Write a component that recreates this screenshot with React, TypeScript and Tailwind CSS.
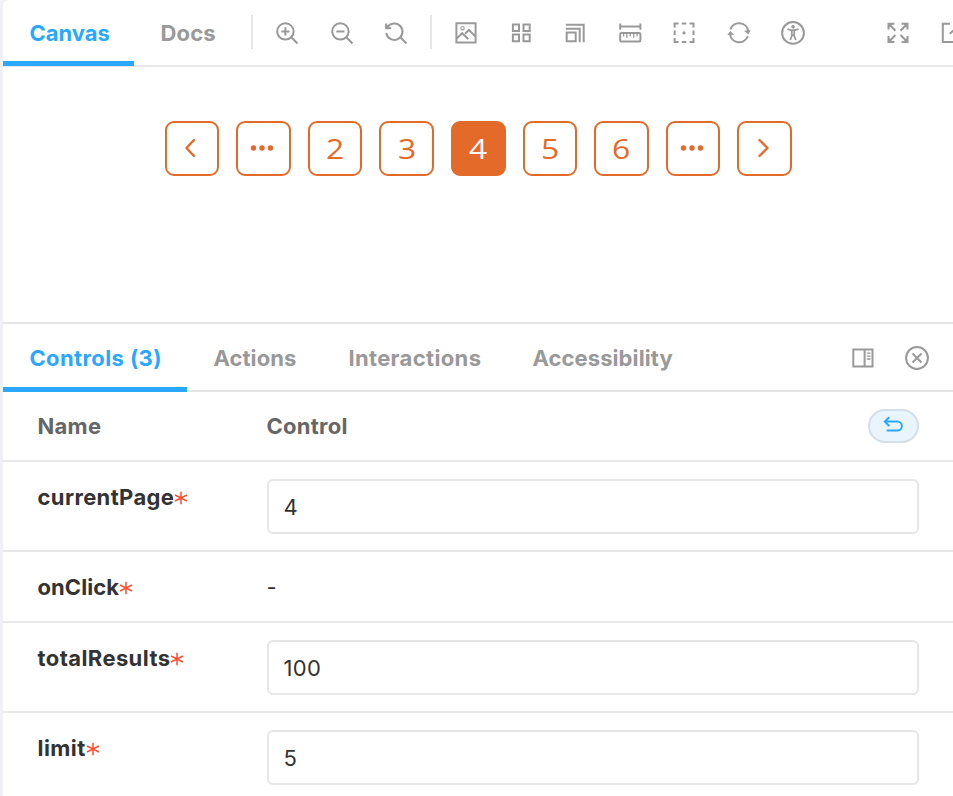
import type { ReactNode } from "react";

function Icon({ children, color = "text-[#999999]" }: { children: ReactNode; color?: string }) {
  return (
    <svg
      viewBox="0 0 24 24"
      fill="none"
      stroke="currentColor"
      strokeWidth="2"
      className={`size-6 shrink-0 ${color}`}
    >
      {children}
    </svg>
  );
}

const zoomIcons = [
  <Icon key="in">
    <circle cx="10.4" cy="10.4" r="8.2" />
    <path d="M16.3 16.3 22.5 22.5M6.3 10.4h8.2M10.4 6.3v8.2" />
  </Icon>,
  <Icon key="out">
    <circle cx="10.4" cy="10.4" r="8.2" />
    <path d="M16.3 16.3 22.5 22.5M6.3 10.4h8.2" />
  </Icon>,
  <Icon key="reset">
    <path d="M2.2 12A8.2 8.2 0 1 0 3.4 6.2M16.3 16.3 22.5 22.5M2.2 2.4v4.8H7.2" />
    <path d="M1.4 2.8 6.6 8H1.4z" fill="currentColor" stroke="none" />
  </Icon>,
];

const canvasIcons = [
  <Icon key="background">
    <path d="M2.4 2.2h19.2v19.4H2.4zM2.5 17.9 8.1 12.2l6.2 5.8M11.1 12.7l3.7-3.7 6.8 6.5" />
    <circle cx="8.5" cy="7.2" r="1.7" strokeWidth="1.1" />
  </Icon>,
  <Icon key="grid">
    <path d="M3.9 3.4H10v6.5H3.9zM14.5 3.4h6.2v6.5h-6.2zM3.9 13.6H10v6.7H3.9zM14.5 13.6h6.2v6.7h-6.2z" />
  </Icon>,
  <Icon key="viewport">
    <path d="M3.7 11.5h9v8.8h-9zM2.8 3.7h17.9v17.5M2.8 7.7h13.9v13.5" />
  </Icon>,
  <Icon key="measure">
    <path d="M2.2 2.5v6.3M22.4 2.5v6.3M2.2 5.6h20.2" />
    <rect x="2.2" y="12.1" width="20.2" height="8.3" rx="1.2" />
    <path d="M5.6 12v3.5M8.9 12v4.8M12.3 12v3.5M15.7 12v4.8M19.1 12v3.5" strokeWidth="1.3" />
  </Icon>,
  <Icon key="outline">
    <path d="M2.6 6.4V2.4h4M17.5 2.4h4v4M21.5 17v4h-4M6.6 21h-4v-4M9.8 2.4h4.5M9.8 21h4.5M2.6 9.4v4.6M21.5 9.4v4.6" />
    <circle cx="12" cy="11.8" r="1.6" fill="currentColor" stroke="none" />
  </Icon>,
  <Icon key="sync">
    <path d="M3.4 8.4A9.2 9.2 0 0 1 21.2 10.2M20.8 15.2A9.2 9.2 0 0 1 3 13.2" />
    <path d="M.4 13.9 3.2 10l4 3.7zM17.1 9.8 23.8 9.2 21.2 13.4z" fill="currentColor" stroke="none" />
  </Icon>,
  <Icon key="vision">
    <circle cx="12" cy="11.9" r="10.9" />
    <circle cx="12" cy="5.7" r="1.8" fill="currentColor" stroke="none" />
    <path d="M6.5 8.1 10.2 9.2h3.6l3.7-1.1M9.2 19l1.9-4.8h1.8l1.9 4.8M10.8 9v5.5M13.2 9v5.5" strokeWidth="1.7" strokeLinejoin="round" />
  </Icon>,
];

const windowIcons = [
  <Icon key="full">
    <path d="M2.5 8.6V2.7h5.9M2.5 2.7l7 7M15.6 2.7h5.9v5.9M21.5 2.7l-7 7M21.5 15v6h-5.9M21.5 21l-7-7M8.4 21H2.5v-6M2.5 21l7-7" />
    <path d="M2 2.2h5.5L2 7.7zM22 2.2v5.5l-5.5-5.5zM22 21.5h-5.5l5.5-5.5zM2 21.5V16l5.5 5.5z" fill="currentColor" stroke="none" />
  </Icon>,
  <Icon key="share">
    <path d="M10 2.7H2.8V21h18.3v-7M9.8 12.8 21 2.5M14 2.5h8v8" />
  </Icon>,
];

const pages = ["prev", "dots", "2", "3", "4", "5", "6", "dots", "next"];

function Page({ value }: { value: string }) {
  const active = value === "4";
  return (
    <button
      className={`flex h-[54.5px] w-[54.6px] items-center justify-center rounded-[9px] border-2 border-[#e46a2a] font-['Open_Sans',sans-serif] text-[28px] ${active ? "bg-[#e46a2a] text-white" : "bg-white text-[#e46a2a]"}`}
    >
      {value === "dots" ? (
        <svg viewBox="0 0 24 6" className="mr-[3px] h-1.5 w-6 fill-current">
          <circle cx="3.5" cy="3" r="2.7" />
          <circle cx="12" cy="3" r="2.7" />
          <circle cx="20.5" cy="3" r="2.7" />
        </svg>
      ) : value === "prev" || value === "next" ? (
        <svg viewBox="0 0 12 20" className="mr-[3px] h-5 w-3 fill-none stroke-current stroke-[2.4]" strokeLinecap="round" strokeLinejoin="round">
          <path d={value === "prev" ? "M10 2 2.5 10 10 18" : "M2.5 2 10.5 10 2.5 18"} />
        </svg>
      ) : (
        <span className="scale-x-[1.14] leading-none">{value}</span>
      )}
    </button>
  );
}

function Tab({ label, className, active }: { label: string; className: string; active?: boolean }) {
  return (
    <div
      className={`flex shrink-0 items-center whitespace-nowrap border-b-[5px] pl-[26px] pt-[5px] font-bold ${active ? "border-[#2aa8ff] text-[#2aa8ff]" : "border-transparent text-[#999999]"} ${className}`}
    >
      {label}
    </div>
  );
}

function Row({ name, value, className, tracking }: { name: string; value?: string; className: string; tracking: string }) {
  return (
    <div className={`flex shrink-0 border-b-2 border-[#e8e8e8] pl-[34.2px] pr-[34px] pt-[17px] text-[#333333] ${className}`}>
      <div className="w-[229px] pt-1 font-bold leading-7">
        <span className={tracking}>{name}</span>
        <svg viewBox="0 0 14 14" className="relative -top-px inline size-3.5 stroke-[#ff4e2e] stroke-[1.5]">
          <path d="M7 .8v12.4M1 4l12 6M1 10l12-6" />
        </svg>
      </div>
      {value ? (
        <div className="flex h-[54.5px] flex-1 items-center rounded-md border-2 border-[#e6e6e6] bg-white pl-[15px] pt-0.5 tracking-[0.3px]">{value}</div>
      ) : (
        <div className="pt-1 leading-7">-</div>
      )}
    </div>
  );
}

export default function App() {
  return (
    <div className="h-[796px] w-[953px] overflow-hidden bg-[#eff1f6] pl-[3.4px] font-[Inter,sans-serif] text-[22px]">
      <div className="flex h-full flex-col overflow-hidden rounded-tl-md bg-white">
        <header className="flex h-[67px] shrink-0 border-b-2 border-[#e8e8e8]">
          <Tab label="Canvas" className="-mb-px w-[131px]" active />
          <Tab label="Docs" className="-mb-px w-[117px] tracking-[0.2px]" />
          <div className="mt-[15px] h-[34px] w-0.5 shrink-0 bg-[#e6e6e6]" />
          <div className="ml-[21.6px] flex items-center gap-[30.55px]">{zoomIcons}</div>
          <div className="ml-[22.4px] mt-[15px] h-[34px] w-0.5 shrink-0 bg-[#e6e6e6]" />
          <div className="ml-[21.7px] flex items-center gap-[30.55px]">{canvasIcons}</div>
          <div className="ml-[80.4px] flex items-center gap-[30.55px]">{windowIcons}</div>
        </header>

        <main className="flex h-[255px] shrink-0 gap-[17px] pl-[161.2px] pt-[54px]">
          {pages.map((value, i) => (
            <Page key={i} value={value} />
          ))}
        </main>

        <nav className="flex h-[70px] shrink-0 border-b-2 border-t-2 border-[#e6e6e6]">
          <Tab label="Controls (3)" className="-mb-0.5 w-[184px] tracking-[0.4px]" active />
          <Tab label="Actions" className="-mb-0.5 w-[135px] tracking-[0.1px]" />
          <Tab label="Interactions" className="-mb-0.5 w-[184px] tracking-[0.35px]" />
          <Tab label="Accessibility" className="-mb-0.5 w-[200px] tracking-[0.1px]" />
          <div className="ml-[144.3px] flex items-center gap-[30.5px] pt-[1.4px]">
            <Icon>
              <path d="M2.3 3.6h19.2v16.8H2.3zM13.6 3.6v16.8" />
              <path d="M15.8 7.2h3.7M15.8 10.1h3.7M15.8 13h3.7" strokeWidth="1.3" />
            </Icon>
            <Icon>
              <circle cx="12" cy="12" r="10.9" />
              <path d="m7.5 7.5 9 9M16.5 7.5l-9 9" />
            </Icon>
          </div>
        </nav>

        <div className="flex h-[70px] shrink-0 items-center border-b-2 border-[#e8e8e8] pl-[34.2px] pr-[34px] font-bold tracking-[0.25px] text-[#666666]">
          <div className="w-[229px] pt-px">Name</div>
          <div className="pt-px">Control</div>
          <button className="ml-auto flex h-[34px] w-[51px] items-center justify-center rounded-full border-2 border-[#d3dfea] bg-[#e9f4fc]">
            <Icon color="text-[#2aa8ff]">
              <path d="M3.3 7.6H15.4a4.5 4.5 0 0 1 0 9H4.7M7.3 3.2 2.8 7.6l4.5 4.4" />
            </Icon>
          </button>
        </div>

        <Row name="currentPage" value="4" className="h-[90px]" tracking="tracking-[0.35px]" />
        <Row name="onClick" className="h-[71px]" tracking="tracking-[0.05px]" />
        <Row name="totalResults" value="100" className="h-[90px]" tracking="tracking-[0.4px]" />
        <Row name="limit" value="5" className="h-[90px]" tracking="tracking-[0.4px]" />
      </div>
    </div>
  );
}
